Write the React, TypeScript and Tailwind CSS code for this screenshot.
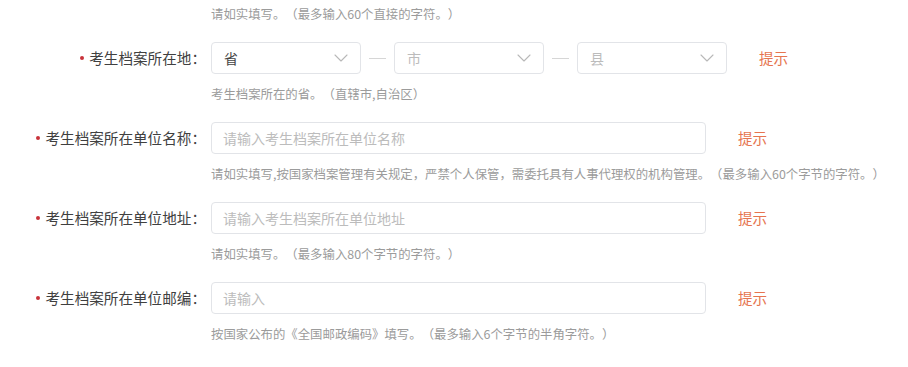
import React from "react";

function Chevron() {
  return (
    <svg width="14" height="8" viewBox="0 0 14 8" fill="none" className="flex-none">
      <path d="M1 1 L7 7 L13 1" stroke="#b8b8b8" strokeWidth="1.1" strokeLinecap="round" strokeLinejoin="round" />
    </svg>
  );
}

function Label({ text }: { text: string }) {
  return (
    <div className="flex-none w-[206px] mr-[5px] flex justify-end items-center text-[14.6px] text-[#404040]">
      <span className="w-[4px] h-[4px] rounded-full bg-[#c8323a] mr-[5px]" />
      <span>{text}</span>
    </div>
  );
}

function Select({ value, placeholder }: { value?: string; placeholder?: string }) {
  return (
    <div className="flex-none w-[150px] h-[32px] border border-[#e2e4e8] rounded-[4px] flex items-center justify-between pl-3 pr-[12px] bg-white">
      <span className={value ? "text-[14px] text-[#444]" : "text-[14px] text-[#bcbcbc]"}>{value ?? placeholder}</span>
      <Chevron />
    </div>
  );
}

function Dash() {
  return <div className="flex-none w-[17px] h-px bg-[#d6d6d6] mx-[8px]" />;
}

function Tip({ className }: { className: string }) {
  return <span className={"text-[14.6px] text-[#e6754f] " + className}>提示</span>;
}

function Hint({ text }: { text: string }) {
  return <div className="pl-[211px] mt-[12px] leading-[16px] text-[12.4px] text-[#9b9b9b] whitespace-nowrap">{text}</div>;
}

function InputRow({ label, placeholder, hint }: { label: string; placeholder: string; hint: string }) {
  return (
    <div className="mt-[20px]">
      <div className="flex items-center">
        <Label text={label} />
        <div className="flex-none w-[495px] h-[32px] border border-[#e2e4e8] rounded-[4px] flex items-center pl-[11px] text-[14px] text-[#bcbcbc]">
          {placeholder}
        </div>
        <Tip className="ml-[32px]" />
      </div>
      <Hint text={hint} />
    </div>
  );
}

export default function App() {
  return (
    <div className="w-[908px] h-[367px] bg-white overflow-hidden pt-[6px] [text-spacing-trim:space-all] font-['Noto_Sans_CJK_SC','Noto_Sans',sans-serif]">
      <div className="pl-[211px] leading-[16px] text-[12.4px] text-[#9b9b9b]">请如实填写。（最多输入60个直接的字符。）</div>

      <div className="mt-[20px]">
        <div className="flex items-center">
          <Label text="考生档案所在地：" />
          <Select value="省" />
          <Dash />
          <Select placeholder="市" />
          <Dash />
          <Select placeholder="县" />
          <Tip className="ml-[32px]" />
        </div>
        <Hint text="考生档案所在的省。（直辖市,自治区）" />
      </div>

      <InputRow
        label="考生档案所在单位名称："
        placeholder="请输入考生档案所在单位名称"
        hint="请如实填写,按国家档案管理有关规定，严禁个人保管，需委托具有人事代理权的机构管理。（最多输入60个字节的字符。）"
      />
      <InputRow
        label="考生档案所在单位地址："
        placeholder="请输入考生档案所在单位地址"
        hint="请如实填写。（最多输入80个字节的字符。）"
      />
      <InputRow
        label="考生档案所在单位邮编："
        placeholder="请输入"
        hint="按国家公布的《全国邮政编码》填写。（最多输入6个字节的半角字符。）"
      />
    </div>
  );
}
